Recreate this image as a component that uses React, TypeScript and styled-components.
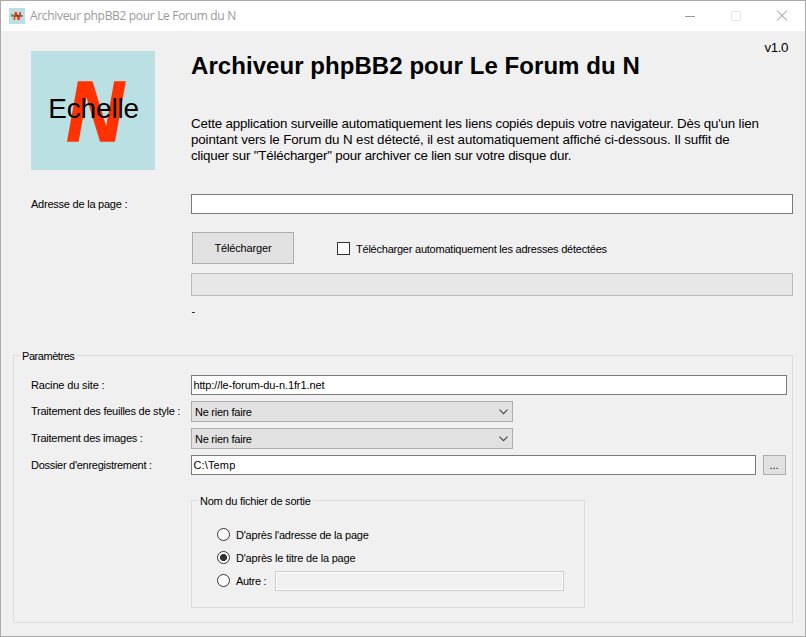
import React, { useState } from "react";
import styled, { createGlobalStyle } from "styled-components";

const GlobalStyle = createGlobalStyle`
  *, *::before, *::after { box-sizing: border-box; }
  body { margin: 0; }
  input, button { font: inherit; color: inherit; letter-spacing: inherit; }
`;

const Window = styled.div`
  width: 806px;
  height: 637px;
  display: flex;
  flex-direction: column;
  border: 1px solid #aaaaaa;
  background: #f0f0f0;
  color: #000;
  font-family: "Liberation Sans", Arial, sans-serif;
  font-size: 11px;
  line-height: 20px;
`;

const TitleBar = styled.header`
  height: 30px;
  flex: none;
  display: flex;
  align-items: center;
  padding: 0 17px 0 8px;
  background: #fff;
  color: #999;
`;

const WindowTitle = styled.span`
  flex: 1;
  margin-left: 5px;
  font-family: "Open Sans", "Noto Sans", sans-serif;
  font-size: 12px;
  letter-spacing: -0.32px;
  white-space: nowrap;
`;

const Caption = styled.div`
  display: flex;
  gap: 34px;
  margin-bottom: 2px;
  svg { display: block; }
`;

const Content = styled.main`
  flex: 1;
  display: flex;
  flex-direction: column;
  padding: 20px 12px 13px 30px;
`;

const Header = styled.section`
  display: flex;
  height: 119px;
`;

const Intro = styled.div`
  flex: 1;
  margin-left: 36px;
`;

const Heading = styled.h1`
  margin: 1px 0 36px;
  font-size: 24px;
  line-height: 28px;
  font-weight: bold;
  letter-spacing: 0.06px;
  white-space: nowrap;
`;

const IntroLine = styled.p<{ $track: number }>`
  margin: 0;
  font-size: 13.333px;
  line-height: 16px;
  letter-spacing: ${(p) => p.$track}px;
  white-space: nowrap;
`;

const Version = styled.span`
  flex: none;
  margin: -11px 5px 0 0;
  height: 16px;
  font-size: 13.333px;
  line-height: 16px;
  letter-spacing: -0.4px;
`;

const Text = styled.span<{ $track?: number }>`
  letter-spacing: ${(p) => p.$track ?? -0.23}px;
  white-space: pre;
`;

const Row = styled.div<{ $top?: number; $height?: number }>`
  display: flex;
  align-items: flex-start;
  height: ${(p) => p.$height ?? 20}px;
  margin-top: ${(p) => p.$top ?? 0}px;
`;

const Label = styled.label`
  width: 160px;
  flex: none;
`;

const TextField = styled.input<{ $track?: number }>`
  flex: 1;
  min-width: 0;
  height: 20px;
  padding: 0 1.4px;
  border: 1px solid #7a7a7a;
  border-radius: 0;
  background: #fff;
  outline: none;
  letter-spacing: ${(p) => p.$track ?? 0}px;
  &:disabled {
    border-color: #cccccc;
    background: #f0f0f0;
    box-shadow: inset 0 0 0 1px #fff;
  }
`;

const Button = styled.button<{ $width: number; $height: number }>`
  width: ${(p) => p.$width}px;
  height: ${(p) => p.$height}px;
  padding: 0;
  border: 1px solid #adadad;
  background: #e1e1e1;
  line-height: 18px;
`;

const BrowseButton = styled(Button)`
  margin: 0 1px 0 7px;
  padding-right: 1px;
`;

const Actions = styled.div`
  display: flex;
  height: 32px;
  margin: 18px 0 9px 161px;
`;

const CheckLabel = styled.label`
  display: flex;
  align-items: center;
  height: 20px;
  margin: 7px 0 0 43px;
`;

const CheckBox = styled.input`
  appearance: none;
  width: 13px;
  height: 13px;
  margin: 0 6px 1px 0;
  border: 1px solid #333;
  background: #fff;
  &:checked { box-shadow: inset 0 0 0 2px #fff; background: #333; }
`;

const Progress = styled.div`
  height: 23px;
  margin-left: 160px;
  border: 1px solid #bcbcbc;
  background: #e6e6e6;
`;

const Status = styled.div`
  height: 20px;
  margin: 5px 0 0 160.5px;
`;

const Group = styled.fieldset<{ $height: number }>`
  min-width: 0;
  height: ${(p) => p.$height}px;
  padding: 0;
  margin: 0;
  border: 1px solid #dcdcdc;
`;

const Legend = styled.legend`
  height: 13px;
  line-height: 15px;
  margin-left: 6px;
  padding: 0 2px;
`;

const SettingsGroup = styled(Group)`
  margin: 28px 0 0 -18px;
`;

const Settings = styled.div`
  padding: 13px 5px 0 17px;
`;

const Combo = styled.button`
  display: flex;
  align-items: center;
  justify-content: space-between;
  width: 322px;
  height: 21px;
  padding: 1px 4px 0 3px;
  border: 1px solid #adadad;
  background: #e1e1e1;
  svg { display: block; margin-top: -1px; }
`;

const OutputGroup = styled(Group)`
  width: 394px;
  margin: 19px 0 0 160px;
`;

const Options = styled.div`
  padding: 18px 20px 0 25px;
`;

const Option = styled.div`
  display: flex;
  height: 20px;
  margin-bottom: 3px;
`;

const OptionLabel = styled.label`
  display: flex;
  align-items: flex-start;
  margin-right: 9px;
`;

const Radio = styled.input`
  appearance: none;
  width: 13px;
  height: 13px;
  margin: 3px 6px 0 0;
  border: 1px solid #333;
  border-radius: 50%;
  background: #fff;
  &:checked {
    background: radial-gradient(circle, #333 0 3.2px, #fff 3.9px);
  }
`;

function Logo({ width, height }: { width: number; height: number }) {
  return (
    <svg width={width} height={height} viewBox="0 0 124 119" preserveAspectRatio="none">
      <rect width="124" height="119" fill="#bbe0e3" />
      <g fontFamily="Liberation Sans, Arial, sans-serif">
        <text transform="translate(35.6 90.2) scale(.93 1)" fontSize="85" fontWeight="bold" fontStyle="italic" fill="#ff3300" stroke="#ff3300" strokeWidth="1.6">N</text>
        <text x="17.2" y="66.5" fontSize="28" letterSpacing="-0.15">Echelle</text>
      </g>
    </svg>
  );
}

function Select({ value }: { value: string }) {
  return (
    <Combo type="button">
      <Text $track={-0.25}>{value}</Text>
      <svg width="9" height="6" viewBox="0 0 9 6" fill="none" stroke="#444" strokeWidth="1.1">
        <path d="M.5 .7 4.5 4.7 8.5 .7" />
      </svg>
    </Combo>
  );
}

export default function App() {
  const [naming, setNaming] = useState("title");
  const [custom, setCustom] = useState("");
  return (
    <Window>
      <GlobalStyle />
      <TitleBar>
        <Logo width={16} height={16} />
        <WindowTitle>Archiveur phpBB2 pour Le Forum du N</WindowTitle>
        <Caption>
          <svg width="12" height="12"><path d="M1 7.5h10" stroke="#999" /></svg>
          <svg width="12" height="12"><rect x="1.5" y="2.5" width="9" height="9" fill="none" stroke="#e6e6e6" /></svg>
          <svg width="12" height="12"><path d="m1 1.5 10 10M11 1.5 1 11.5" stroke="#8c8c8c" /></svg>
        </Caption>
      </TitleBar>
      <Content>
        <Header>
          <Logo width={124} height={119} />
          <Intro>
            <Heading>Archiveur phpBB2 pour Le Forum du N</Heading>
            <IntroLine $track={-0.18}>Cette application surveille automatiquement les liens copiés depuis votre navigateur. Dès qu'un lien</IntroLine>
            <IntroLine $track={-0.11}>pointant vers le Forum du N est détecté, il est automatiquement affiché ci-dessous. Il suffit de</IntroLine>
            <IntroLine $track={-0.2}>cliquer sur "Télécharger" pour archiver ce lien sur votre disque dur.</IntroLine>
          </Intro>
          <Version>v1.0</Version>
        </Header>
        <Row $top={24}>
          <Label><Text>Adresse de la page :</Text></Label>
          <TextField />
        </Row>
        <Actions>
          <Button $width={102} $height={32}><Text $track={-0.15}>Télécharger</Text></Button>
          <CheckLabel>
            <CheckBox type="checkbox" />
            <Text>Télécharger automatiquement les adresses détectées</Text>
          </CheckLabel>
        </Actions>
        <Progress />
        <Status>-</Status>
        <SettingsGroup $height={274}>
          <Legend><Text $track={-0.45}>Paramètres</Text></Legend>
          <Settings>
            <Row>
              <Label><Text $track={-0.15}>Racine du site :</Text></Label>
              <TextField $track={-0.1} defaultValue="http://le-forum-du-n.1fr1.net" />
            </Row>
            <Row $top={6} $height={21}>
              <Label><Text $track={-0.24}>Traitement des feuilles de style :</Text></Label>
              <Select value="Ne rien faire" />
            </Row>
            <Row $top={6} $height={21}>
              <Label><Text $track={-0.26}>Traitement des images :</Text></Label>
              <Select value="Ne rien faire" />
            </Row>
            <Row $top={6}>
              <Label><Text $track={-0.28}>Dossier d'enregistrement :</Text></Label>
              <TextField $track={0.15} defaultValue="C:\Temp" />
              <BrowseButton $width={23} $height={20}>...</BrowseButton>
            </Row>
            <OutputGroup $height={114}>
              <Legend><Text>Nom du fichier de sortie</Text></Legend>
              <Options>
                <Option>
                  <OptionLabel>
                    <Radio type="radio" name="naming" checked={naming === "address"} onChange={() => setNaming("address")} />
                    <Text $track={-0.22}>D'après l'adresse de la page</Text>
                  </OptionLabel>
                </Option>
                <Option>
                  <OptionLabel>
                    <Radio type="radio" name="naming" checked={naming === "title"} onChange={() => setNaming("title")} />
                    <Text $track={-0.21}>D'après le titre de la page</Text>
                  </OptionLabel>
                </Option>
                <Option>
                  <OptionLabel>
                    <Radio type="radio" name="naming" checked={naming === "other"} onChange={() => setNaming("other")} />
                    <Text $track={-0.3}>Autre :</Text>
                  </OptionLabel>
                  <TextField value={custom} disabled={naming !== "other"} onChange={(e) => setCustom(e.target.value)} />
                </Option>
              </Options>
            </OutputGroup>
          </Settings>
        </SettingsGroup>
      </Content>
    </Window>
  );
}
